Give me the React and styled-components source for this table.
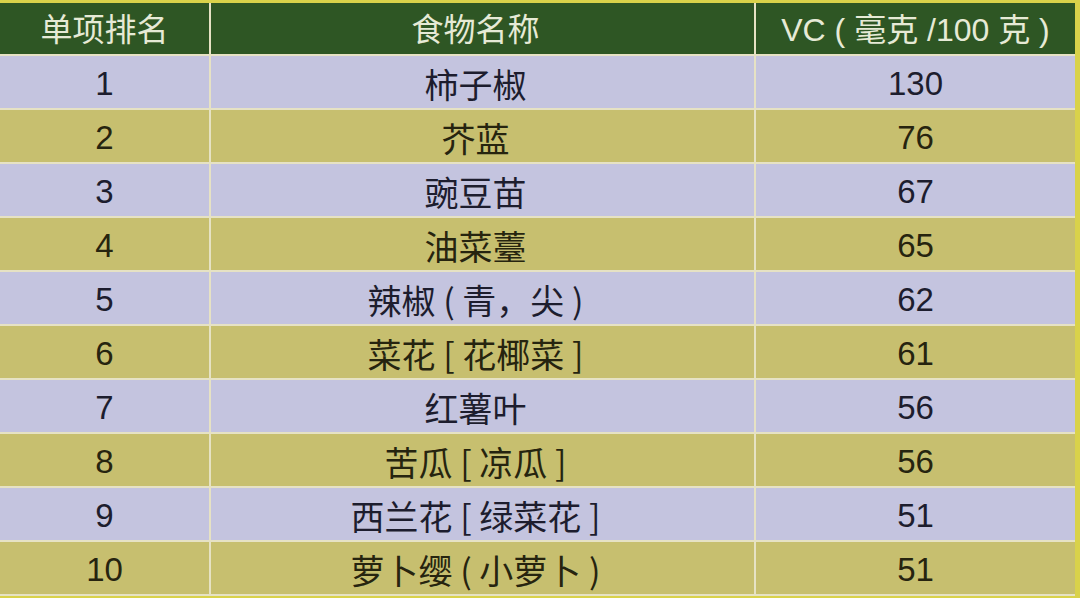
import React from "react";
import styled, { createGlobalStyle } from "styled-components";

const GlobalStyle = createGlobalStyle`
  html, body {
    margin: 0;
    padding: 0;
    background: #d9d24a;
  }
  body {
    font-family: "Liberation Sans", "Noto Sans CJK SC", sans-serif;
  }
`;

const Page = styled.div`
  width: 1080px;
  height: 598px;
  padding: 3px 5px 0 0;
  box-sizing: border-box;
  overflow: hidden;
`;

const Table = styled.div`
  display: grid;
  grid-template-columns: 209px 543px 1fr;
  grid-template-rows: 51px repeat(10, 52px);
  gap: 2px;
  background: #e6e2c4;
  border-bottom: 2px solid #e6e2c4;
`;

const Cell = styled.div`
  display: flex;
  align-items: center;
  justify-content: center;
  font-size: ${(p) => (p.head ? "32px" : "33px")};
  white-space: pre;
  background: ${(p) => (p.head ? "#2e5624" : p.odd ? "#c4c4df" : "#c7bf6f")};
  color: ${(p) => (p.head ? "#e6ead6" : p.odd ? "#1d1d2e" : "#26240f")};
  padding-top: ${(p) => (p.head ? "0" : "3px")};
  padding-bottom: ${(p) => (p.head ? "4px" : "0")};
  padding-right: ${(p) => (p.mid ? "14px" : "0")};
  box-sizing: border-box;
`;

const Han = styled.span`
  font-family: "Noto Sans CJK SC", sans-serif;
  font-size: ${(p) => (p.head ? "32px" : "34px")};
`;

const rows = [
  ["1", "柿子椒", "130"],
  ["2", "芥蓝", "76"],
  ["3", "豌豆苗", "67"],
  ["4", "油菜薹", "65"],
  ["5", "辣椒 ( 青，尖 )", "62"],
  ["6", "菜花 [ 花椰菜 ]", "61"],
  ["7", "红薯叶", "56"],
  ["8", "苦瓜 [ 凉瓜 ]", "56"],
  ["9", "西兰花 [ 绿菜花 ]", "51"],
  ["10", "萝卜缨 ( 小萝卜 )", "51"],
];

export default function App() {
  return (
    <>
      <GlobalStyle />
      <Page>
        <Table>
          <Cell head>
            <Han head>单项排名</Han>
          </Cell>
          <Cell head mid>
            <Han head>食物名称</Han>
          </Cell>
          <Cell head>VC ( 毫克 /100 克 )</Cell>
          {rows.map((r, i) => (
            <React.Fragment key={i}>
              <Cell odd={i % 2 === 0}>{r[0]}</Cell>
              <Cell odd={i % 2 === 0} mid>
                <Han>{r[1]}</Han>
              </Cell>
              <Cell odd={i % 2 === 0}>{r[2]}</Cell>
            </React.Fragment>
          ))}
        </Table>
      </Page>
    </>
  );
}
